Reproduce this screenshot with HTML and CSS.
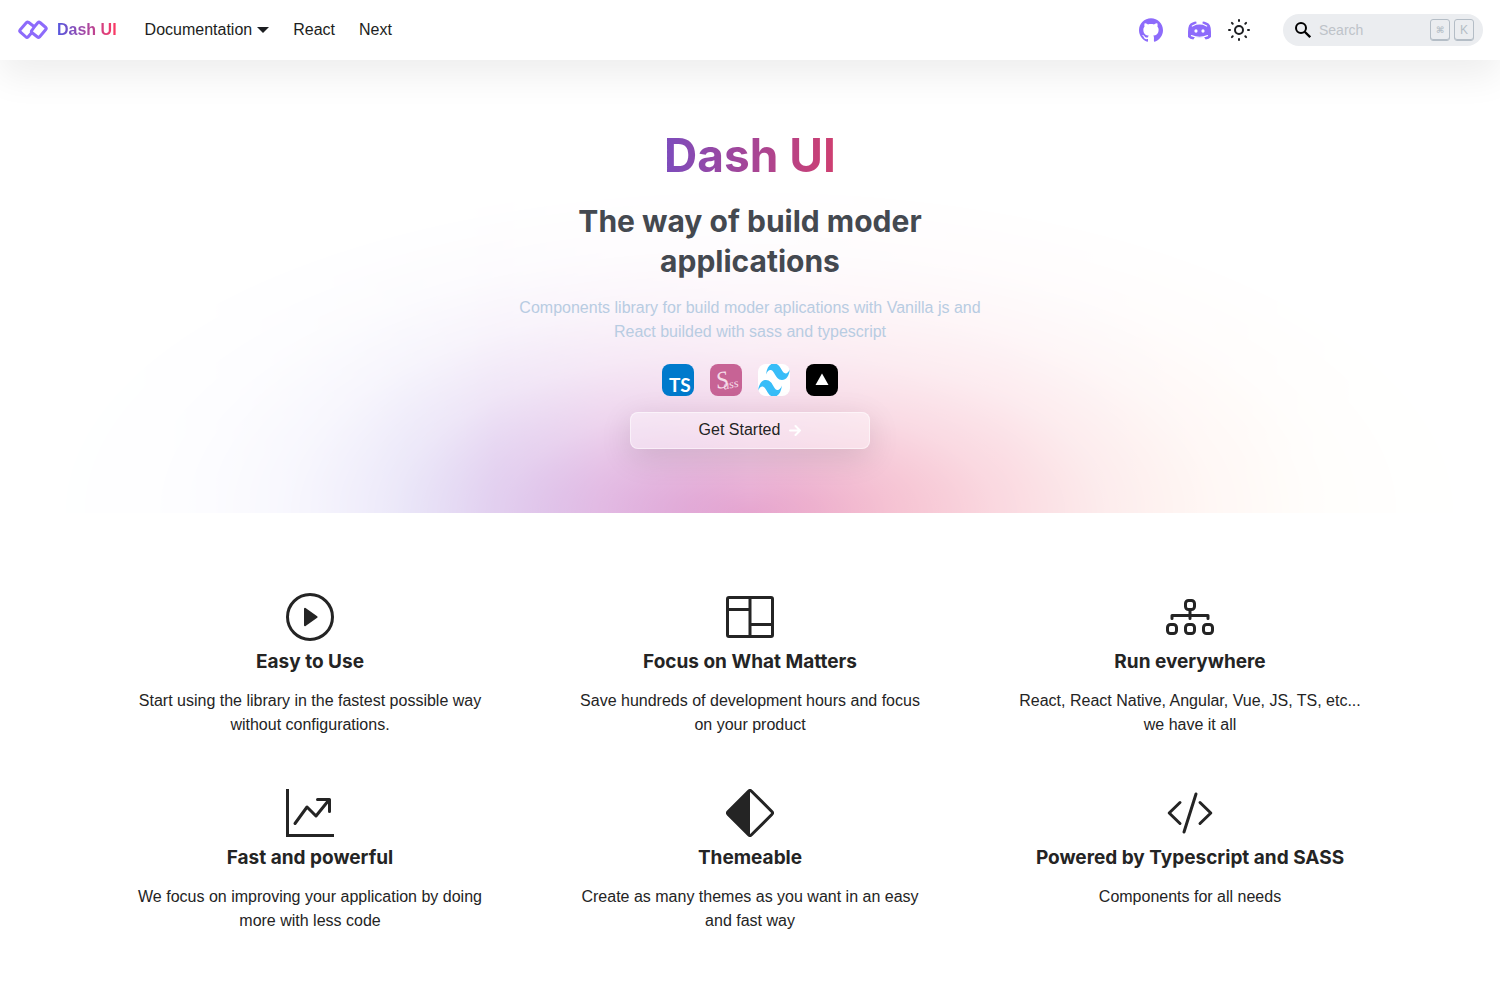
FILE: index.html
```html
<!DOCTYPE html>
<html lang="en">
<head>
<meta charset="utf-8">
<meta name="viewport" content="width=device-width, initial-scale=1">
<title>Dash UI</title>
<link rel="stylesheet" href="styles.css">
</head>
<body>
<header class="navbar">
  <nav class="navbar-links" aria-label="Main">
    <a class="brand" href="#">
      <svg class="brand-logo" viewBox="0 0 30 20" aria-hidden="true"><g fill="none" stroke="#8d6bfb" stroke-width="3" stroke-linejoin="round" stroke-linecap="round"><path d="M16 6.5 10.5 2.3Q9.500 1.500 8.500 2.500L2 10Q1.300 11 2.200 11.800L8 17Q9 18 10 17L13 13.500"/><path d="M17 6 20 2.500Q21 1.500 22 2.500L27.800 7.500Q28.800 8.500 27.800 9.500L21.500 17Q20.500 18 19.500 17L13.800 12.500Q13 11.500 13.800 10.500Z"/></g></svg>
      <span class="gradient-text brand-name">Dash UI</span>
    </a>
    <a class="nav-link" href="#">Documentation <span class="caret"></span></a>
    <a class="nav-link" href="#">React</a>
    <a class="nav-link" href="#">Next</a>
  </nav>
  <div class="navbar-tools">
    <a class="tool" href="#" aria-label="GitHub"><svg class="icon-md" viewBox="0 0 24 24" fill="#8d6bfb"><path d="M12 .297c-6.630 0-12 5.373-12 12 0 5.303 3.438 9.800 8.205 11.385.6.113.82-.258.82-.577 0-.285-.01-1.040-.015-2.040-3.338.724-4.042-1.610-4.042-1.610C4.422 18.070 3.633 17.700 3.633 17.700c-1.087-.744.084-.729.084-.729 1.205.084 1.838 1.236 1.838 1.236 1.070 1.835 2.809 1.305 3.495.998.108-.776.417-1.305.76-1.605-2.665-.3-5.466-1.332-5.466-5.930 0-1.310.465-2.380 1.235-3.220-.135-.303-.54-1.523.105-3.176 0 0 1.005-.322 3.300 1.230.96-.267 1.980-.399 3-.405 1.020.006 2.040.138 3 .405 2.280-1.552 3.285-1.230 3.285-1.230.645 1.653.24 2.873.12 3.176.765.84 1.230 1.910 1.230 3.220 0 4.610-2.805 5.625-5.475 5.920.42.36.81 1.096.81 2.220 0 1.606-.015 2.896-.015 3.286 0 .315.21.69.825.57C20.565 22.092 24 17.592 24 12.297c0-6.627-5.373-12-12-12"/></svg></a>
    <a class="tool" href="#" aria-label="Discord"><svg class="icon-md" viewBox="-1 0 24 24"><path fill="#8d6bfb" d="M4.500 4.600Q6.500 3.700 8.200 3.600l.8 1.500Q11.500 4.700 14 5.100l.8-1.500q1.700.1 3.700 1Q23 5.500 23 14v5q-2 2.200-5.300 2.600l-1.600-2.300Q11.500 20.200 6.900 19.300l-1.600 2.300Q2 21.200 0 19v-5Q0 5.500 4.500 4.600Z"/><path fill="none" stroke="#fff" stroke-width="1.200" stroke-linecap="round" d="M4.300 8 8 6.200q3.500-.8 7 0l3.700 1.800M3.500 17.600q8 3.300 16 0"/><path fill="#fff" d="M8.600 3h5.800v2.900H8.600ZM7 19l4.500 1 4.500-1v4H7Z"/><ellipse cx="8" cy="13" rx="1.600" ry="1.800" fill="#fff"/><ellipse cx="15" cy="13" rx="1.600" ry="1.800" fill="#fff"/></svg></a>
    <button class="theme-toggle" type="button" aria-label="Switch theme"><svg class="icon-md" viewBox="0 0 24 24" fill="none" stroke="#1c1e21" stroke-width="2"><circle cx="12" cy="12" r="4"/><path stroke-linecap="round" d="M12 2v1M12 21v1M2 12h1M21 12h1M4.900 4.900l.8.800M18.300 18.300l.8.800M4.900 19.100l.8-.8M18.300 5.700l.8-.8"/></svg></button>
    <label class="search">
      <svg class="icon-sm" viewBox="0 0 16 16" fill="none" stroke="#000" stroke-width="2" aria-hidden="true"><circle cx="6" cy="6" r="5"/><path stroke-width="2.300" d="m9.700 9.700 5.500 5.500"/></svg>
      <input class="search-input" type="search" placeholder="Search" aria-label="Search">
      <kbd class="key key-symbol">⌘</kbd><kbd class="key">K</kbd>
    </label>
  </div>
</header>
<main>
  <section class="hero">
    <h1 class="gradient-text hero-title">Dash UI</h1>
    <h2 class="hero-subtitle">The way of build moder applications</h2>
    <p class="hero-text">Components library for build moder aplications with Vanilla js and React builded with sass and typescript</p>
    <div class="stack">
      <svg class="stack-icon" viewBox="0 0 32 32" role="img" aria-label="TypeScript"><rect width="32" height="32" fill="#007acc"/><text class="ts-mark" x="7" y="28">TS</text></svg>
      <svg class="stack-icon" viewBox="0 0 32 32" role="img" aria-label="Sass"><rect width="32" height="32" fill="#c76395"/><g transform="rotate(-12 16 16)"><text class="sass-initial" x="6" y="23">S</text><text class="sass-rest" x="12" y="25">ass</text></g></svg>
      <svg class="stack-icon" viewBox="0 0 32 32" role="img" aria-label="Tailwind"><rect width="32" height="32" fill="#fff"/><path fill="#38bdf8" transform="translate(0 -11.600) scale(1.333 2.300)" d="M12 4.800c-3.200 0-5.200 1.600-6 4.800 1.200-1.600 2.600-2.200 4.200-1.800.913.228 1.565.89 2.288 1.624C13.666 10.618 15.027 12 18 12c3.200 0 5.200-1.600 6-4.800-1.200 1.600-2.600 2.200-4.200 1.800-.913-.228-1.565-.89-2.288-1.624C16.337 6.182 14.976 4.800 12 4.800ZM6 12c-3.200 0-5.200 1.600-6 4.800 1.200-1.600 2.600-2.200 4.200-1.800.913.228 1.565.89 2.288 1.624C7.666 17.818 9.027 19.200 12 19.200c3.200 0 5.200-1.600 6-4.800-1.200 1.600-2.600 2.200-4.200 1.800-.913-.228-1.565-.89-2.288-1.624C10.337 13.382 8.976 12 6 12Z"/></svg>
      <svg class="stack-icon" viewBox="0 0 32 32" role="img" aria-label="Vercel"><rect width="32" height="32" fill="#000"/><path fill="#fff" d="m16 9.500 6.500 11.500h-13Z"/></svg>
    </div>
    <button class="cta" type="button">Get Started <svg class="cta-arrow" viewBox="0 0 12 12" fill="none" stroke="#fff" stroke-width="2" stroke-linecap="round" stroke-linejoin="round" aria-hidden="true"><path d="M1 6.500h10M6.500 2 11 6.500 6.500 11"/></svg></button>
  </section>
  <section class="features">
    <article class="feature">
      <svg class="feature-icon" viewBox="0 0 48 48" aria-hidden="true"><circle cx="24" cy="24" r="22.500" fill="none" stroke="currentColor" stroke-width="3"/><path fill="currentColor" stroke="currentColor" stroke-width="2" stroke-linejoin="round" d="M19 15.800v16.400L30.600 24Z"/></svg>
      <h3 class="feature-title">Easy to Use</h3>
      <p class="feature-text">Start using the library in the fastest possible way without configurations.</p>
    </article>
    <article class="feature">
      <svg class="feature-icon" viewBox="0 0 48 48" fill="none" stroke="currentColor" stroke-width="3" aria-hidden="true"><rect x="1.500" y="4.500" width="45" height="39" rx="1.500"/><path d="M24 4v40M2 16.500h22M24 31.500h22"/></svg>
      <h3 class="feature-title">Focus on What Matters</h3>
      <p class="feature-text">Save hundreds of development hours and focus on your product</p>
    </article>
    <article class="feature">
      <svg class="feature-icon" viewBox="0 0 48 48" fill="none" stroke="currentColor" stroke-width="3" aria-hidden="true"><rect x="19.500" y="7.500" width="9" height="9" rx="3"/><rect x="1.500" y="31.500" width="9" height="9" rx="3"/><rect x="19.500" y="31.500" width="9" height="9" rx="3"/><rect x="37.500" y="31.500" width="9" height="9" rx="3"/><path stroke-linecap="round" stroke-linejoin="round" d="M24 17v8.500M6 25.500v-3h36v3"/></svg>
      <h3 class="feature-title">Run everywhere</h3>
      <p class="feature-text">React, React Native, Angular, Vue, JS, TS, etc... we have it all</p>
    </article>
    <article class="feature">
      <svg class="feature-icon" viewBox="0 0 48 48" fill="none" stroke="currentColor" stroke-width="3" aria-hidden="true"><path d="M1.500 0v46.500H48"/><path stroke-linecap="round" stroke-linejoin="round" d="M9 34.500 21 18l9 9 12.500-15.500M31.500 10.500h12v12"/></svg>
      <h3 class="feature-title">Fast and powerful</h3>
      <p class="feature-text">We focus on improving your application by doing more with less code</p>
    </article>
    <article class="feature">
      <svg class="feature-icon" viewBox="0 0 48 48" aria-hidden="true"><path fill="none" stroke="currentColor" stroke-width="3" d="M22.500 2.200Q24 .7 25.500 2.200L45.800 22.500Q47.300 24 45.800 25.500L25.500 45.800Q24 47.300 22.500 45.800L2.200 25.500Q.7 24 2.200 22.500Z"/><path fill="currentColor" d="M24 1v46L1 24Z"/></svg>
      <h3 class="feature-title">Themeable</h3>
      <p class="feature-text">Create as many themes as you want in an easy and fast way</p>
    </article>
    <article class="feature">
      <svg class="feature-icon" viewBox="0 0 48 48" fill="none" stroke="currentColor" stroke-width="3" stroke-linecap="round" stroke-linejoin="round" aria-hidden="true"><path d="M14 13.500 3.200 24 14 34.500M34 13.500 44.800 24 34 34.500M30 5 18 43"/></svg>
      <h3 class="feature-title">Powered by Typescript and SASS</h3>
      <p class="feature-text">Components for all needs</p>
    </article>
  </section>
</main>
</body>
</html>
```
FILE: styles.css
```css
*, *::before { box-sizing: border-box; }

body {
  margin: 0;
  background: #fff;
  color: #242424;
  font: 16px/24px "Liberation Sans", Arial, sans-serif;
}

h1, h2, h3, p { margin: 0; }
h1, h2, h3 { font-family: Inter, sans-serif; font-weight: 700; }
a { color: inherit; text-decoration: none; }
button { font: inherit; color: inherit; border: 0; background: none; padding: 0; cursor: pointer; }
svg { display: block; }

.gradient-text {
  background: linear-gradient(90deg, #5457e0, #ff3860);
  -webkit-background-clip: text;
  background-clip: text;
  color: transparent;
}

/* Navbar */
.navbar {
  position: relative;
  z-index: 1;
  display: flex;
  align-items: center;
  justify-content: space-between;
  height: 60px;
  padding: 0 17px 0 18px;
  background: #fff;
  color: #1c1e21;
  box-shadow: 0 16px 36px rgba(0, 0, 0, .07);
}
.navbar-links, .navbar-tools { display: flex; align-items: center; }
.navbar-links { gap: 24px; }
.brand { display: flex; align-items: center; gap: 9px; margin-right: 4px; }
.brand-logo { width: 30px; height: 20px; }
.brand-name { font-weight: 700; }
.nav-link { display: flex; align-items: center; gap: 5px; }
.caret {
  border: 6px solid transparent;
  border-top-color: currentColor;
  border-bottom: 0;
}
.icon-md { width: 24px; height: 24px; }
.icon-sm { flex: none; width: 16px; height: 16px; }
.tool { margin-right: 24px; }
.tool + .theme-toggle { margin-left: -8px; }
.search {
  display: flex;
  align-items: center;
  gap: 4px;
  width: 200px;
  height: 32px;
  margin-left: 32px;
  padding: 0 9px 0 12px;
  border-radius: 16px;
  background: #ebedf0;
}
.search-input {
  flex: 1;
  min-width: 0;
  padding: 0 4px;
  border: 0;
  outline: 0;
  background: none;
  font: 14px/20px "Liberation Sans", Arial, sans-serif;
}
.search-input::placeholder { color: #bec3c9; }
.key {
  width: 20px;
  height: 22px;
  border: 1px solid #b4bdc6;
  border-radius: 3px;
  box-shadow: inset 0 -1px 0 #b4bdc6;
  color: #b4bdc6;
  font: 12px/20px "Liberation Sans", "DejaVu Sans", sans-serif;
  text-align: center;
}
.key-symbol { font-size: 9px; font-weight: 700; }

/* Hero */
.hero {
  position: relative;
  display: flex;
  flex-direction: column;
  align-items: center;
  padding: 65px 16px 64px;
  text-align: center;
}
.hero::before {
  content: "";
  position: absolute;
  inset: 0;
  z-index: -1;
  background: linear-gradient(90deg, #d4dcff 8%, #b8b4f5 17%, #a08de0 27%, #b07cd4 33%, #d08fd2 40%, #e6a6d0 50%, #f09fb8 60%, #f298ac 67%, #f2a0a6 73%, #ffb190 83%, #ffe0a0 90%);
  -webkit-mask-image: radial-gradient(53% 80% at 50% 100%, #000, rgba(0, 0, 0, .86) 8%, rgba(0, 0, 0, .63) 18%, rgba(0, 0, 0, .38) 31%, rgba(0, 0, 0, .2) 45%, rgba(0, 0, 0, .09) 59%, rgba(0, 0, 0, .03) 73%, transparent 92%);
  mask-image: radial-gradient(53% 80% at 50% 100%, #000, rgba(0, 0, 0, .86) 8%, rgba(0, 0, 0, .63) 18%, rgba(0, 0, 0, .38) 31%, rgba(0, 0, 0, .2) 45%, rgba(0, 0, 0, .09) 59%, rgba(0, 0, 0, .03) 73%, transparent 92%);
}
.hero-title {
  width: 100%;
  max-width: 480px;
  background-image: linear-gradient(90deg, #3258ff, #7c4cbd 32%, #cf3f70 68%, #ff3838);
  font-size: 46px;
  line-height: 60px;
}
.hero-subtitle {
  max-width: 480px;
  margin-top: 16px;
  color: #444950;
  font-size: 30px;
  line-height: 40px;
}
.hero-text { max-width: 480px; margin-top: 15px; color: #b8cce2; }
.stack { display: flex; gap: 16px; margin-top: 20px; }
.stack-icon { width: 32px; height: 32px; border-radius: 8px; }
.ts-mark { font: 700 19px Lato, sans-serif; fill: #fff; }
.sass-initial { font: italic 24px "Liberation Serif", serif; fill: #f5dbe8; }
.sass-rest { font: italic 12px "Liberation Serif", serif; fill: #f5dbe8; }
.cta {
  display: flex;
  align-items: center;
  justify-content: center;
  gap: 9px;
  width: 240px;
  height: 37px;
  margin-top: 16px;
  padding-bottom: 2px;
  border: 1px solid rgba(255, 255, 255, .5);
  border-radius: 8px;
  background: rgba(255, 255, 255, .4);
  box-shadow: 0 8px 32px rgba(0, 0, 0, .12);
}
.cta-arrow { width: 12px; height: 12px; }

/* Features */
.features {
  display: grid;
  grid-template-columns: repeat(3, 1fr);
  row-gap: 52px;
  max-width: 1320px;
  margin: 0 auto;
  padding: 80px 0 64px;
}
.feature { display: flex; flex-direction: column; align-items: center; text-align: center; }
.feature-icon { width: 48px; height: 48px; }
.feature-title { margin-top: 9px; font-size: 19px; line-height: 24px; }
.feature-text { max-width: 352px; margin-top: 15px; }
```
